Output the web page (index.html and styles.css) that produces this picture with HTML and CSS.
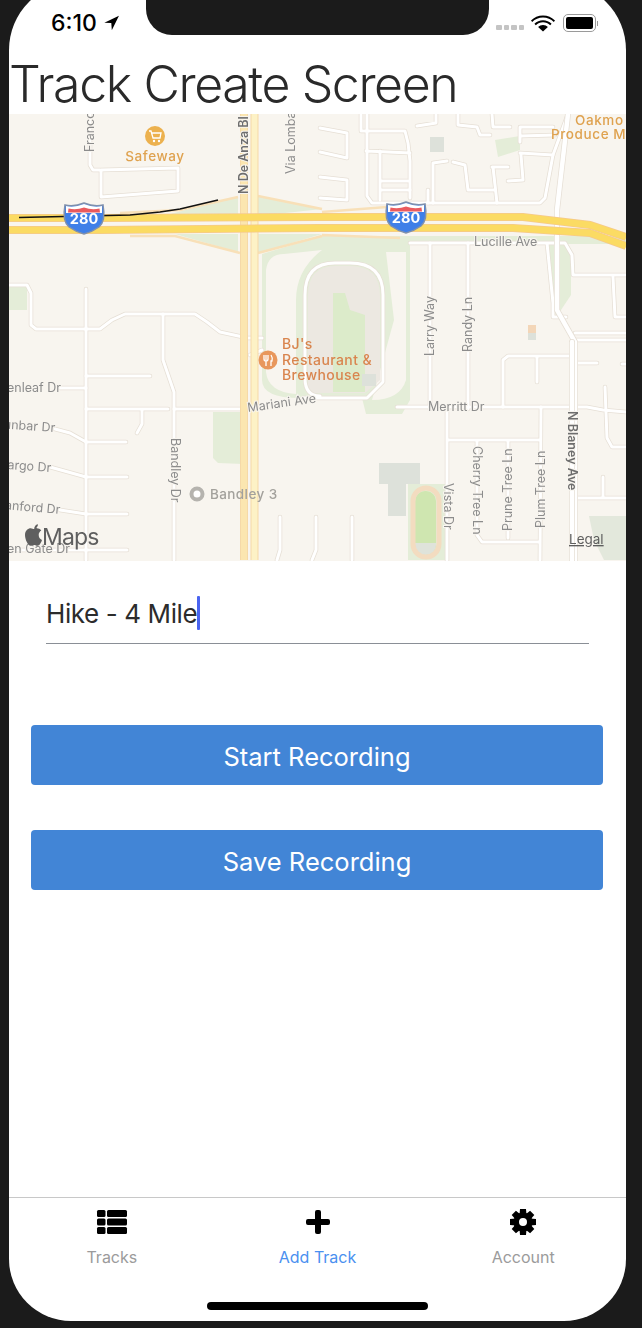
FILE: index.html
```html
<!DOCTYPE html>
<html lang="en">
<head>
    <meta charset="UTF-8">
    <title>Track Create Screen</title>
    <link rel="stylesheet" href="styles.css">
</head>
<body>
<div class="phone">
    <div class="notch"></div>
    <div class="status">
        <div class="status-left">
            <span class="clock">6:10</span>
            <svg class="arrow" width="17" height="16" viewBox="0 0 15 15"><path d="M14.5 .8 L.8 7.2 L7.3 7.6 L7.8 14.2 Z"/></svg>
        </div>
        <div class="status-right">
            <div class="signal"><i></i><i></i><i></i><i></i></div>
            <svg class="wifi" width="24" height="18" viewBox="0 0 24 18">
                <path d="M12 3.6 C7.8 3.6 4 5.2 1.2 7.9 L0 6.5 C3.1 3.3 7.3 1.4 12 1.4 C16.7 1.4 20.9 3.3 24 6.5 L22.8 7.9 C20 5.2 16.2 3.6 12 3.6 Z"/>
                <path d="M12 8.3 C9.2 8.3 6.7 9.4 4.8 11.2 L3.4 9.7 C5.7 7.5 8.7 6.2 12 6.2 C15.3 6.2 18.3 7.5 20.6 9.7 L19.2 11.2 C17.3 9.4 14.8 8.3 12 8.3 Z"/>
                <path d="M12 10.9 C13.9 10.9 15.6 11.7 16.9 12.9 L12 17.6 L7.1 12.9 C8.4 11.7 10.1 10.9 12 10.9 Z"/>
            </svg>
            <div class="battery"><div class="battery-level"></div></div>
            <div class="battery-tip"></div>
        </div>
    </div>

    <h1 class="title">Track Create Screen</h1>

    <svg class="map" width="617" height="447" viewBox="9 114 617 447">
        <defs>
            <g id="streets">
                <path d="M90 114 V165 L93 170 H100 M101 170 L178 168 V191 L101 197 Z"/>
                <path d="M9 285 H27 L31 293 V325 L36 329 H100 L112 320 L125 314 H195 L207 322 L220 332 L243 337"/>
                <path d="M86 289 V560 M163 314 V360 L174 392 V560"/>
                <path d="M86 376 H150 M60 388 H86 M86 409 H168 M174 409 H243 M142 409 V424 L137 433"/>
                <path d="M55 429 L70 433 L86 442 H126 M50 467 L86 477 H127 M60 510 L86 514 H127 M9 550 H127"/>
                <path d="M280 517 V550 L277 560 M316 517 V550 L312 560 M352 517 V560"/>
                <path d="M262 338 H243 M262 350 L250 355"/>
                <path d="M303 398 H367 L383 382 V295 Q383 263 350 263 H335 Q305 263 305 295 V378 Q305 396 320 396"/>
                <path d="M361 114 V131 H405 L408 143 L410 161 V198 M366 151 L410 153 M367 114 V196 L372 203 H540 L545 198 L553 155 L568 114"/>
                <path d="M380 151 V200 M380 181 H408 M380 190 H410"/>
                <path d="M320 128 L347 133 V158 L320 152 M320 177 L347 180 V200 L320 198"/>
                <path d="M417 126 L436 123 V114 M458 114 V125 L477 127 L480 135 H490 M492 114 L493 127 H510"/>
                <path d="M520 127 H553 M520 127 V142 M520 136 L555 135 M520 153 L553 155 M521 155 L523 180 L508 181"/>
                <path d="M433 163 V203 M433 163 L447 161 M453 162 L465 165 L468 190 H495 M428 190 V203"/>
                <path d="M492 167 H508 M493 167 L497 203"/>
                <path d="M410 243 H565 L572 255 L573 275 H626 M547 243 L553 303 V317 H566"/>
                <path d="M430 243 V409 M468 243 V409 M613 277 L615 317 H626 M575 333 H626 M575 340 H626"/>
                <path d="M503 407 V360 L508 356 H570 M537 356 V382 M575 363 H597 M622 364 H626"/>
                <path d="M397 407 H587 L603 410 L626 412 M605 387 L607 438 L612 447 H626"/>
                <path d="M447 407 V560 M448 440 H540 M541 407 L540 560 M508 440 V538 M477 440 V535 L482 542 H540"/>
                <path d="M575 498 H626 M603 477 V498"/>
            </g>
            <g id="mainroad">
                <path d="M568 114 L557 210 V310 L575 342 V560"/>
            </g>
            <g id="shield">
                <path class="shield-blue" d="M-19 -13 Q-10 -11 0 -15 Q10 -11 19 -13 Q22 3 15 9 Q8 14 0 16 Q-8 14 -15 9 Q-22 3 -19 -13 Z"/>
                <path class="shield-white" d="M-18 -12 Q-10 -10 0 -14 Q10 -10 18 -12 L18 -5 H-18 Z"/>
                <path class="shield-red" d="M-15.500 -9.500 Q-8 -7.500 0 -10.500 Q8 -7.500 15.500 -9.500 L16 -5.500 H-16 Z"/>
            </g>
            <clipPath id="track-clip"><rect x="415" y="491" width="21" height="64" rx="10"/></clipPath>
        </defs>

        <rect class="land" x="9" y="114" width="617" height="447"/>

        <!-- parks and buildings -->
        <path class="park" d="M170 214 L238 197 V216 Z M175 234 H238 V252 Z M258 196 L322 209 L258 216 Z M258 234 H322 L258 253 Z"/>
        <path class="park" d="M262 254 L322 236 H626 V244 H410 V400 L402 414 H366 L362 398 H300 Q262 398 262 380 Z"/>
        <path class="land" d="M284 254 Q268 254 266 270 V372 Q268 392 296 394 L296 300 Q296 270 322 250 Z M372 400 Q400 400 406 380 V252 H386 L394 320 Z"/>
        <path class="stadium" d="M308 296 Q308 266 335 266 H350 Q380 266 380 296 V380 L365 393 H308 Z"/>
        <path class="park-deep" d="M333 293 H345 L350 310 L365 315 V392 H333 Z"/>
        <rect class="block" x="362" y="374" width="14" height="12"/>
        <path class="park" d="M213 412 H243 V464 L218 463 L213 458 Z M9 287 H27 V310 H9 Z M495 140 L520 136 V150 L498 157 Z"/>
        <path class="park" d="M547 245 L566 245 L571 256 V295 L557 316 L552 310 Z"/>
        <rect class="block" x="430" y="137" width="14" height="15"/>
        <path class="park" d="M408 484 H446 V560 H408 Z"/>
        <path class="block" d="M379 463 H420 V484 H406 V516 H388 V484 H379 Z"/>
        <path class="block-light" d="M589 516 H626 V560 H604 L594 540 Z"/>
        <rect class="spot-orange" x="528" y="325" width="8" height="8"/>
        <rect class="block" x="528" y="333" width="8" height="7"/>

        <!-- track -->
        <rect class="track-field" x="415" y="491" width="21" height="64" rx="10"/>
        <rect class="track-end" x="415" y="543" width="21" height="14" clip-path="url(#track-clip)"/>
        <rect class="track-ring" x="413" y="488" width="26" height="69" rx="13"/>

        <!-- streets -->
        <use href="#streets" class="road-case"/>
        <use href="#streets" class="road-fill"/>
        <use href="#mainroad" class="main-case"/>
        <use href="#mainroad" class="main-fill"/>
        <path class="main-case" d="M572 342 V560"/>
        <path class="main-fill" d="M572 342 V560"/>

        <!-- freeway and ramps -->
        <path class="ramp" d="M120 213 L180 210 L238 197 M130 236 L175 236 L240 253 M258 196 L322 209 M258 253 L322 236 M322 212 L400 206 M322 235 L400 238"/>
        <path class="artery" d="M244 114 V560 M254.500 114 V560"/>
        <path class="artery-fill" d="M244 114 V560"/>
        <path class="artery-light" d="M254.500 114 V560"/>
        <path class="freeway" d="M9 218 H100 L320 217 H523 L590 225 L626 237"/>
        <path class="freeway" d="M9 230 H100 L320 228 H513 L590 233 L626 246"/>
        <path class="freeway-fill" d="M9 218 H100 L320 217 H523 L590 225 L626 237"/>
        <path class="freeway-fill" d="M9 230 H100 L320 228 H513 L590 233 L626 246"/>

        <!-- route drawn so far -->
        <path class="route" d="M19 217.500 L130 215 L160 212 L180 209 L218 200"/>

        <!-- shields -->
        <use href="#shield" x="84" y="218"/>
        <text class="shield-num" x="84" y="224">280</text>
        <use href="#shield" x="406" y="217"/>
        <text class="shield-num" x="406" y="223">280</text>

        <!-- pois -->
        <circle class="poi-shop" cx="155" cy="136" r="10"/>
        <path class="poi-glyph" d="M149 131 H151 L153 138 H160 L161 133 H152"/>
        <circle class="poi-dot" cx="154" cy="141" r="1.200"/>
        <circle class="poi-dot" cx="159" cy="141" r="1.200"/>
        <text class="label-shop" x="155" y="161">Safeway</text>
        <text class="label-shop label-shop-start" x="575" y="125">Oakmo</text>
        <text class="label-shop label-shop-start" x="551" y="139">Produce M</text>

        <circle class="poi-food" cx="268" cy="360" r="9.500"/>
        <path class="poi-glyph" d="M264 355 V359 Q264 361 266 361 V366 M266 355 V360 M268 355 V359 Q268 361 266 361 M271 355 Q273 358 272 361 H271 V366"/>
        <text class="label-food" x="282" y="349">BJ's</text>
        <text class="label-food" x="282" y="365">Restaurant &amp;</text>
        <text class="label-food" x="282" y="380">Brewhouse</text>

        <circle class="poi-ring" cx="197" cy="494" r="5.500"/>
        <text class="label-place" x="210" y="499">Bandley 3</text>

        <!-- street names -->
        <text class="street" transform="rotate(-90 94 152)" x="94" y="152">Franco</text>
        <text class="street street-major" transform="rotate(-90 248 194)" x="248" y="194">N De Anza Bl</text>
        <text class="street" transform="rotate(-90 295 174)" x="295" y="174">Via Lomba</text>
        <text class="street" transform="rotate(-90 434 356)" x="434" y="356">Larry Way</text>
        <text class="street" transform="rotate(-90 472 352)" x="472" y="352">Randy Ln</text>
        <text class="street" x="474" y="246">Lucille Ave</text>
        <text class="street" x="428" y="411">Merritt Dr</text>
        <text class="street" transform="rotate(-8 248 412)" x="248" y="412">Mariani Ave</text>
        <text class="street" transform="rotate(90 171 438)" x="171" y="438">Bandley Dr</text>
        <text class="street" transform="rotate(90 444 483)" x="444" y="483">Vista Dr</text>
        <text class="street" transform="rotate(90 473 446)" x="473" y="446">Cherry Tree Ln</text>
        <text class="street" transform="rotate(-90 512 531)" x="512" y="531">Prune Tree Ln</text>
        <text class="street" transform="rotate(-90 545 528)" x="545" y="528">Plum Tree Ln</text>
        <text class="street street-major" transform="rotate(90 568 411)" x="568" y="411">N Blaney Ave</text>
        <text class="street street-end" x="61" y="392">Greenleaf Dr</text>
        <text class="street street-end" transform="rotate(4 55 432)" x="55" y="432">Dunbar Dr</text>
        <text class="street street-end" transform="rotate(4 51 472)" x="51" y="472">Wargo Dr</text>
        <text class="street street-end" transform="rotate(5 60 514)" x="60" y="514">Sanford Dr</text>
        <text class="street street-end" x="70" y="553">Golden Gate Dr</text>

        <!-- attribution -->
        <path class="apple" d="M36.500 527.500 C37.500 526.500 38 525.500 38 524.300 C36.800 524.400 35.600 525.200 35 526.200 C34.500 527 34.100 528 34.200 529 C33.200 529 32 528.200 30.700 528.200 C28 528.200 25 530.500 25 535 C25 539.500 28 545.800 30.600 545.800 C31.800 545.800 32.700 545 34.100 545 C35.500 545 36.200 545.800 37.500 545.800 C39.700 545.800 41.500 541.800 42 540 C39.700 539 38.700 537.200 38.700 535 C38.700 533 39.700 531.500 41.300 530.500 C40.300 529 38.500 528.200 36.800 528.200 Z"/>
        <text class="maps-word" x="42" y="545">Maps</text>
        <text class="legal" x="569" y="544">Legal</text>
    </svg>

    <div class="form">
        <div class="field">
            <span class="field-text">Hike - 4 Mile</span>
            <span class="caret"></span>
        </div>
        <div class="btn">Start Recording</div>
        <div class="btn">Save Recording</div>
    </div>

    <div class="tabbar">
        <div class="tabs">
            <div class="tab">
                <svg class="tab-icon" width="32" height="26" viewBox="0 0 32 26">
                    <rect x="1" y="1" width="8.500" height="7" rx="1.500"/><rect x="11" y="1" width="20" height="7" rx="1.500"/>
                    <rect x="1" y="9.500" width="8.500" height="7" rx="1.500"/><rect x="11" y="9.500" width="20" height="7" rx="1.500"/>
                    <rect x="1" y="18" width="8.500" height="7" rx="1.500"/><rect x="11" y="18" width="20" height="7" rx="1.500"/>
                </svg>
                <span class="tab-label">Tracks</span>
            </div>
            <div class="tab tab-active">
                <svg class="tab-icon" width="32" height="26" viewBox="0 0 32 26">
                    <path d="M13 3 Q13 1 15 1 H17 Q19 1 19 3 V10 H26 Q28 10 28 12 V14 Q28 16 26 16 H19 V23 Q19 25 17 25 H15 Q13 25 13 23 V16 H6 Q4 16 4 14 V12 Q4 10 6 10 H13 Z"/>
                </svg>
                <span class="tab-label">Add Track</span>
            </div>
            <div class="tab">
                <svg class="tab-icon" width="32" height="26" viewBox="0 0 32 26">
                    <g transform="translate(16 13)">
                        <path class="gear-tooth" d="M-3 -13 H3 L3.500 -7 H-3.500 Z"/>
                        <path class="gear-tooth" transform="rotate(45)" d="M-3 -13 H3 L3.500 -7 H-3.500 Z"/>
                        <path class="gear-tooth" transform="rotate(90)" d="M-3 -13 H3 L3.500 -7 H-3.500 Z"/>
                        <path class="gear-tooth" transform="rotate(135)" d="M-3 -13 H3 L3.500 -7 H-3.500 Z"/>
                        <path class="gear-tooth" transform="rotate(180)" d="M-3 -13 H3 L3.500 -7 H-3.500 Z"/>
                        <path class="gear-tooth" transform="rotate(225)" d="M-3 -13 H3 L3.500 -7 H-3.500 Z"/>
                        <path class="gear-tooth" transform="rotate(270)" d="M-3 -13 H3 L3.500 -7 H-3.500 Z"/>
                        <path class="gear-tooth" transform="rotate(315)" d="M-3 -13 H3 L3.500 -7 H-3.500 Z"/>
                        <path fill-rule="evenodd" d="M-9.500 0 A9.500 9.500 0 1 1 9.500 0 A9.500 9.500 0 1 1 -9.500 0 Z M-4 0 A4 4 0 1 0 4 0 A4 4 0 1 0 -4 0 Z"/>
                    </g>
                </svg>
                <span class="tab-label">Account</span>
            </div>
        </div>
        <div class="home-bar"></div>
    </div>
</div>
</body>
</html>
```

FILE: styles.css
```css
html, body {
    margin: 0;
    height: 100%;
}

body {
    background: #1b1b1b;
    overflow: hidden;
    font-family: Inter, "Liberation Sans", sans-serif;
}

.phone {
    position: relative;
    display: flex;
    flex-direction: column;
    width: 617px;
    height: 1339px;
    margin: -18px 0 0 9px;
    background: #fff;
    border-radius: 68px 68px 62px 62px;
    overflow: hidden;
}

.notch {
    position: absolute;
    top: 0;
    left: 137px;
    width: 343px;
    height: 53px;
    background: #1b1b1b;
    border-radius: 0 0 26px 26px;
}

/* status bar */
.status {
    display: flex;
    justify-content: space-between;
    align-items: center;
    padding: 18px 0 0 42px;
    box-sizing: border-box;
    height: 74px;
    color: #000;
}

.status-left {
    display: flex;
    align-items: center;
    gap: 6px;
    margin-top: -10px;
}

.clock {
    font-size: 23px;
    font-weight: 500;
}

.arrow {
    fill: #000;
}

.status-right {
    display: flex;
    align-items: center;
    margin-top: -10px;
    padding-right: 28px;
}

.signal {
    display: flex;
    gap: 2px;
    margin: 9px 7px 0 0;
}

.signal i {
    width: 5.500px;
    height: 5px;
    background: #c4c4c4;
    border-radius: 1px;
}

.wifi {
    fill: #000;
    margin-right: 8px;
}

.battery {
    width: 33px;
    height: 18px;
    box-sizing: border-box;
    padding: 2px;
    border: 1px solid #9a9a9a;
    border-radius: 5px;
}

.battery-level {
    height: 100%;
    background: #000;
    border-radius: 2px;
}

.battery-tip {
    width: 1px;
    height: 5px;
    margin-left: 1px;
    background: #9a9a9a;
}

.title {
    margin: 0;
    height: 58px;
    font-size: 50px;
    line-height: 56px;
    font-weight: 350;
    letter-spacing: -1.400px;
    color: #2a2a2a;
    white-space: nowrap;
}

/* map */
.map {
    display: block;
    flex: none;
    filter: blur(.4px);
}

.land { fill: #f8f5ef; }
.park { fill: #e4edd8; }
.park-deep { fill: #dcebca; }
.stadium { fill: #ece8e1; }
.block { fill: #dde1da; }
.block-light { fill: #e3e8dc; }
.spot-orange { fill: #f3d6b8; }

.track-field { fill: #cfe6b0; }
.track-end { fill: #dfe3da; }
.track-ring { fill: none; stroke: #f3dcc0; stroke-width: 5; }

.road-case, .road-fill, .main-case, .main-fill {
    fill: none;
    stroke-linecap: round;
    stroke-linejoin: round;
}

.road-case { stroke: #e6dfd5; stroke-width: 4.500; }
.road-fill { stroke: #fff; stroke-width: 3; }
.main-case { stroke: #e6dfd5; stroke-width: 6; }
.main-fill { stroke: #fff; stroke-width: 4.500; }

.ramp { fill: none; stroke: #f8e0b8; stroke-width: 2.500; }
.artery { fill: none; stroke: #f5d9a8; stroke-width: 8; }
.artery-fill { fill: none; stroke: #fbe6b0; stroke-width: 6; }
.artery-light { fill: none; stroke: #fdf2c6; stroke-width: 6; }
.freeway { fill: none; stroke: #f5c98c; stroke-width: 8; }
.freeway-fill { fill: none; stroke: #fbdb63; stroke-width: 6.500; }

.route {
    fill: none;
    stroke: #111;
    stroke-width: 1.500;
}

.shield-blue { fill: #3f7fe8; stroke: #7f90ad; stroke-width: 1.500; }
.shield-white { fill: #fff; }
.shield-red { fill: #ea5a5e; }
.shield-num {
    fill: #fff;
    font-size: 14.500px;
    font-weight: 700;
    text-anchor: middle;
}

.poi-shop { fill: #ecb14e; }
.poi-food { fill: #e8975c; }
.poi-glyph { fill: none; stroke: #fff; stroke-width: 1.300; }
.poi-dot { fill: #fff; }
.poi-ring { fill: #fff; stroke: #b5b3ae; stroke-width: 4; }

.label-shop {
    fill: #dfa24f;
    font-size: 13.500px;
    font-weight: 500;
    letter-spacing: .6px;
    text-anchor: middle;
}

.label-shop-start { text-anchor: start; }

.label-food {
    fill: #d9854e;
    font-size: 14px;
    font-weight: 500;
    letter-spacing: .4px;
}

.label-place {
    fill: #a3a19c;
    font-size: 13.500px;
    font-weight: 500;
    letter-spacing: .4px;
}

.street {
    fill: #8c8c8c;
    font-size: 12.500px;
    paint-order: stroke;
    stroke: #f8f5ef;
    stroke-width: 2;
}

.street-major {
    fill: #6e6e6e;
    font-weight: 600;
}

.street-end { text-anchor: end; }

.apple { fill: #5f5f5f; }

.maps-word {
    fill: #5f5f5f;
    font-size: 23px;
    letter-spacing: -.8px;
}

.legal {
    fill: #5f5f5f;
    font-size: 13.500px;
    text-decoration: underline;
}

/* form */
.form {
    display: flex;
    flex-direction: column;
    padding-top: 34px;
}

.field {
    display: flex;
    align-items: center;
    height: 49px;
    box-sizing: border-box;
    margin: 0 37px 81px;
    padding-bottom: 12px;
    border-bottom: 1.500px solid #8a8f96;
}

.field-text {
    font-size: 26px;
    letter-spacing: -.4px;
    color: #2c2c2c;
}

.caret {
    width: 2.500px;
    height: 34px;
    background: #4a64f0;
    border-radius: 1px;
}

.btn {
    height: 60px;
    margin: 0 23px 45px 22px;
    background: #4285d6;
    border-radius: 4px;
    color: #fff;
    font-size: 25.500px;
    line-height: 64px;
    text-align: center;
}

/* tab bar */
.tabbar {
    margin-top: auto;
    height: 124px;
    border-top: 1px solid #c8c8c8;
    box-sizing: border-box;
}

.tabs {
    display: flex;
    padding-top: 11px;
}

.tab {
    flex: 1;
    display: flex;
    flex-direction: column;
    align-items: center;
    color: #9b9b9b;
}

.tab-active {
    color: #4a90f0;
}

.tab-icon {
    fill: #000;
}

.tab-label {
    margin-top: 12px;
    font-size: 16px;
    line-height: 20px;
}

.home-bar {
    width: 221px;
    height: 8px;
    margin: 35px auto 0;
    background: #000;
    border-radius: 4px;
}
```
